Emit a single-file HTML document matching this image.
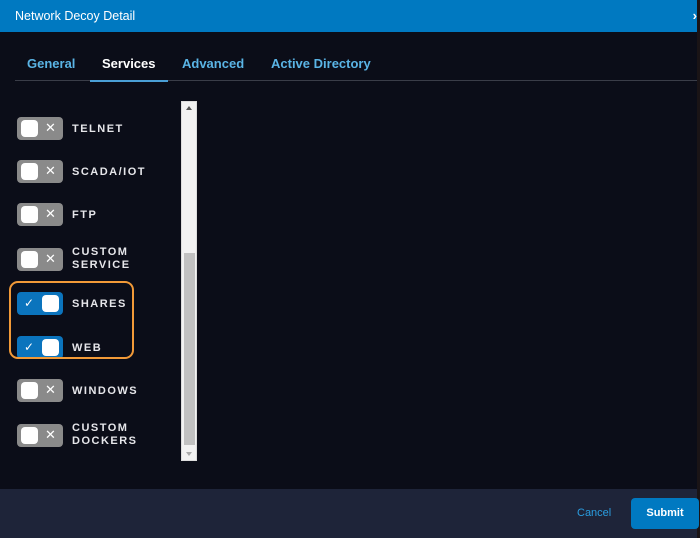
<!DOCTYPE html>
<html><head><style>
*{margin:0;padding:0;box-sizing:border-box}
body{width:700px;height:538px;background:#0b0d18;font-family:"Liberation Sans",sans-serif;position:relative;overflow:hidden}
.hdr{position:absolute;left:0;top:0;width:697px;height:32px;background:#0079c1;color:#fff;font-size:12.5px;padding:9px 0 0 15px}
.hdr .x{position:absolute;right:0;top:8px;font-weight:bold;font-size:13px}
.rb{position:absolute;left:697px;top:0;width:3px;height:538px;background:#1a1416}
.tabs{position:absolute;left:15px;top:56px;font-size:13px;font-weight:bold;color:#5ab4e5}
.tab{position:absolute;top:0;white-space:nowrap}
.line{position:absolute;left:15px;top:80px;width:682px;height:1px;background:#3a3d48}
.ul{position:absolute;left:90px;top:80px;width:78px;height:2px;background:#4a9fd6}
.tg{position:absolute;left:17px;width:46px;height:23px;border-radius:4px;background:#8a8a8a}
.tg .k{position:absolute;left:4px;top:3px;width:17px;height:17px;border-radius:4px;background:#fff}
.tg .s{position:absolute;left:28px;top:3px;color:#fff;font-size:13px}
.tg.on{background:#0b74bd}
.tg.on .k{left:25px}
.tg.on .s{left:7px;top:4px;font-size:12px}
.lb{position:absolute;left:72px;color:#e6e6ea;font-size:11px;font-weight:bold;letter-spacing:1.5px;line-height:12px}
.sb{position:absolute;left:181px;top:101px;width:16px;height:360px;background:#f2f2f2;border:1px solid #ddd}
.th{position:absolute;left:2px;top:151px;width:11px;height:192px;background:#c1c1c1}
.ob{position:absolute;left:9px;top:281px;width:125px;height:78px;border:2px solid #f29a38;border-radius:9px}
.ft{position:absolute;left:0;top:489px;width:697px;height:49px;background:#1e2439}
.cancel{position:absolute;left:577px;top:507px;color:#2a9de0;font-size:11px}
.sub{position:absolute;left:631px;top:498px;width:68px;height:31px;border-radius:4px;background:#0079c1;color:#fff;font-size:11px;font-weight:bold;text-align:center;line-height:31px}
</style></head><body>
<div class="hdr">Network Decoy Detail<span class="x">›</span></div>
<div class="rb"></div>
<div class="tabs">
<span class="tab" style="left:12px">General</span>
<span class="tab" style="left:87px;color:#fff">Services</span>
<span class="tab" style="left:167px">Advanced</span>
<span class="tab" style="left:256px">Active Directory</span>
</div>
<div class="line"></div><div class="ul"></div>

<div class="tg" style="top:117px"><div class="k"></div><span class="s">✕</span></div><div class="lb" style="top:123px">TELNET</div>
<div class="tg" style="top:160px"><div class="k"></div><span class="s">✕</span></div><div class="lb" style="top:166px">SCADA/IOT</div>
<div class="tg" style="top:203px"><div class="k"></div><span class="s">✕</span></div><div class="lb" style="top:209px">FTP</div>
<div class="tg" style="top:248px"><div class="k"></div><span class="s">✕</span></div><div class="lb" style="top:246px;line-height:13px">CUSTOM<br>SERVICE</div>
<div class="tg on" style="top:292px"><div class="k"></div><span class="s">✓</span></div><div class="lb" style="top:298px">SHARES</div>
<div class="tg on" style="top:336px"><div class="k"></div><span class="s">✓</span></div><div class="lb" style="top:342px">WEB</div>
<div class="tg" style="top:379px"><div class="k"></div><span class="s">✕</span></div><div class="lb" style="top:385px">WINDOWS</div>
<div class="tg" style="top:424px"><div class="k"></div><span class="s">✕</span></div><div class="lb" style="top:422px;line-height:13px">CUSTOM<br>DOCKERS</div>
<div class="ob"></div>

<div class="sb"><div class="th"></div>
<div style="position:absolute;left:4px;top:4px;width:0;height:0;border-left:3px solid transparent;border-right:3px solid transparent;border-bottom:4px solid #555"></div>
<div style="position:absolute;left:4px;bottom:4px;width:0;height:0;border-left:3px solid transparent;border-right:3px solid transparent;border-top:4px solid #aaa"></div>
</div>

<div class="ft"></div>
<div class="cancel">Cancel</div>
<div class="sub">Submit</div>
</body></html>
